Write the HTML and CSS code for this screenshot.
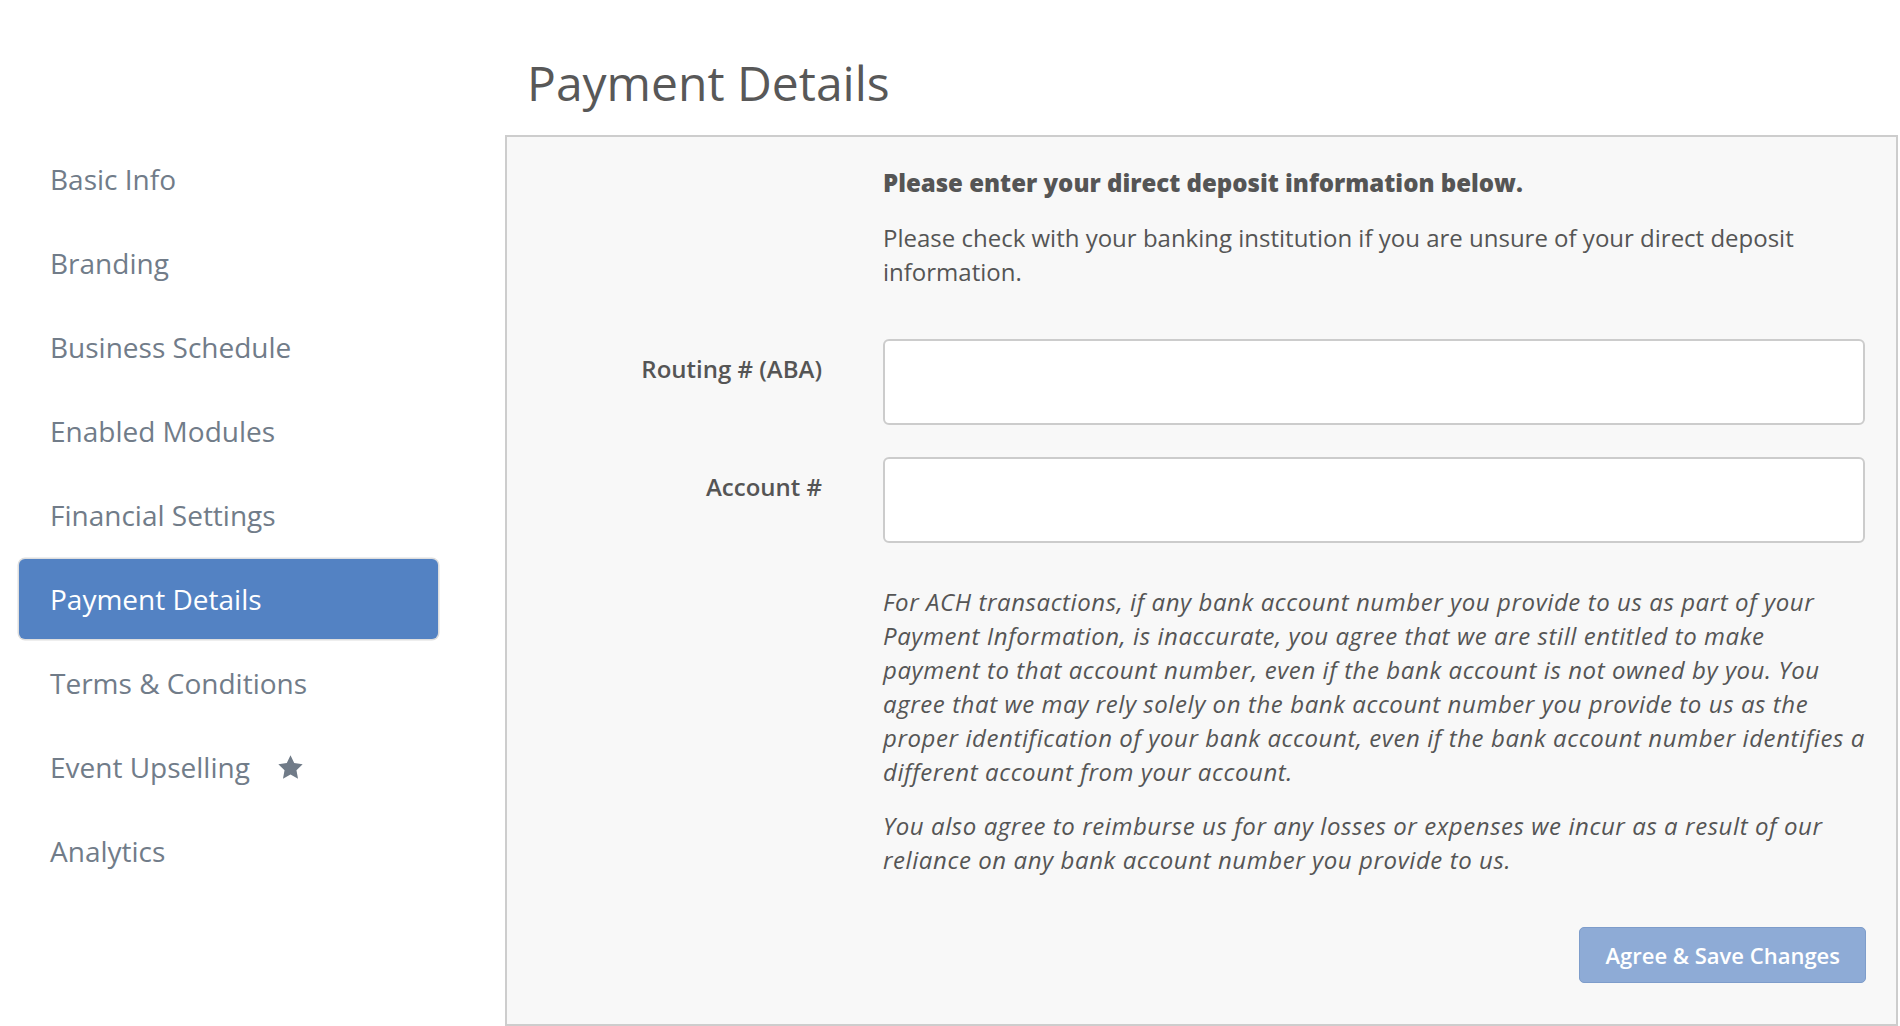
FILE: index.html
```html
<!DOCTYPE html>
<html lang="en">
<head>
<meta charset="utf-8">
<title>Payment Details</title>
<link rel="stylesheet" href="styles.css">
</head>
<body>
<div class="page">
  <aside class="sidebar">
    <nav class="nav">
      <a class="nav-item" href="#">Basic Info</a>
      <a class="nav-item" href="#">Branding</a>
      <a class="nav-item" href="#">Business Schedule</a>
      <a class="nav-item" href="#">Enabled Modules</a>
      <a class="nav-item" href="#">Financial Settings</a>
      <a class="nav-item active" href="#">Payment Details</a>
      <a class="nav-item" href="#">Terms &amp; Conditions</a>
      <a class="nav-item" href="#">Event Upselling <svg class="star" viewBox="0 0 24 24" aria-hidden="true"><path d="M12 1.2l3.3 6.9 7.5 1-5.5 5.3 1.4 7.5L12 18.3l-6.7 3.6 1.4-7.5L1.2 9.1l7.5-1z"/></svg></a>
      <a class="nav-item" href="#">Analytics</a>
    </nav>
  </aside>
  <main class="main">
    <h1 class="title">Payment Details</h1>
    <section class="panel">
      <div class="row intro">
        <div></div>
        <div class="content">
          <p class="lead">Please enter your direct deposit information below.</p>
          <p class="text">Please check with your banking institution if you are unsure of your direct deposit information.</p>
        </div>
      </div>
      <div class="row field">
        <label class="label" for="routing">Routing # (ABA)</label>
        <input class="input" id="routing" type="text">
      </div>
      <div class="row field">
        <label class="label" for="account">Account #</label>
        <input class="input" id="account" type="text">
      </div>
      <div class="row terms">
        <div></div>
        <div class="content">
          <p class="note">For ACH transactions, if any bank account number you provide to us as part of your Payment Information, is inaccurate, you agree that we are still entitled to make payment to that account number, even if the bank account is not owned by you. You agree that we may rely solely on the bank account number you provide to us as the proper identification of your bank account, even if the bank account number identifies a different account from your account.</p>
          <p class="note">You also agree to reimburse us for any losses or expenses we incur as a result of our reliance on any bank account number you provide to us.</p>
        </div>
      </div>
      <div class="row actions">
        <div></div>
        <div class="content action-bar">
          <button class="btn" type="button">Agree &amp; Save Changes</button>
        </div>
      </div>
    </section>
  </main>
</div>
</body>
</html>
```
FILE: styles.css
```css
html, body {
  margin: 0;
  padding: 0;
  background: #ffffff;
}

body {
  font-family: "Open Sans", "Liberation Sans", sans-serif;
  color: #555555;
}

.page {
  display: flex;
  height: 1026px;
  overflow: hidden;
}

/* Sidebar */
.sidebar {
  flex: none;
  width: 505px;
  box-sizing: border-box;
  padding: 139px 0 0 19px;
}

.nav {
  width: 419px;
  display: flex;
  flex-direction: column;
  gap: 4px;
}

.nav-item {
  display: flex;
  align-items: center;
  height: 80px;
  box-sizing: border-box;
  padding-left: 31px;
  font-size: 28px;
  line-height: 38px;
  color: #717c89;
  text-decoration: none;
  border-radius: 6px;
}

.nav-item.active {
  background: #5382c3;
  color: #ffffff;
  box-shadow: 0 0 0 1.5px #dedede;
}

.star {
  width: 27px;
  height: 27px;
  margin-left: 27px;
  fill: #707b88;
}

/* Main */
.main {
  flex: none;
  width: 1393px;
  padding-top: 56px;
}

.title {
  margin: 0 0 26px 22px;
  font-size: 48px;
  font-weight: 400;
  line-height: 53px;
  color: #585858;
}

.panel {
  border: 2px solid #cdcdcd;
  background: #f8f8f8;
  padding: 29px 31px 41px 0;
}

.row {
  display: grid;
  grid-template-columns: 315px 982px;
  column-gap: 61px;
}

.content p {
  margin: 0;
  font-size: 24px;
  line-height: 34px;
}

.lead {
  font-weight: 800;
  color: #555555;
}

.content .lead {
  margin-bottom: 21px;
}

.intro {
  margin-bottom: 50px;
}

.field + .field {
  margin-top: 32px;
}

.label {
  text-align: right;
  padding-top: 13px;
  font-size: 24px;
  line-height: 34px;
  font-weight: 600;
  color: #555555;
}

.input {
  height: 86px;
  box-sizing: border-box;
  border: 2px solid #cccccc;
  border-radius: 6px;
  background: #ffffff;
  margin: 0;
  font: inherit;
}

.terms {
  margin-top: 42px;
}

.content .note {
  font-style: italic;
  letter-spacing: 0.58px;
  color: #555555;
}

.content .note + .note {
  margin-top: 20px;
}

.actions {
  margin-top: 50px;
}

.action-bar {
  display: flex;
  justify-content: flex-end;
}

.btn {
  height: 56px;
  box-sizing: border-box;
  padding: 11px 25px;
  border: 1px solid #7e9dcb;
  border-radius: 5px;
  background: #8eabd6;
  color: #ffffff;
  font-family: "Open Sans", "Liberation Sans", sans-serif;
  font-size: 22px;
  font-weight: 600;
  line-height: 32px;
  margin-right: -1px;
}
```
